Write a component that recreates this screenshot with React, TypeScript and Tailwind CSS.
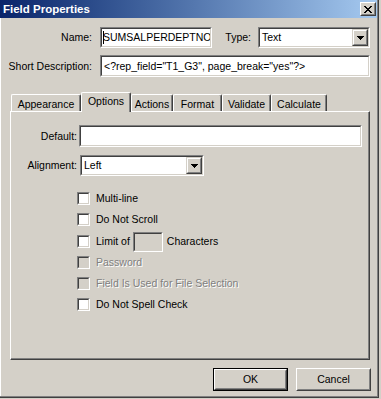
import React from "react";

function Sunken({
  className = "",
  inner = "bg-white",
  children,
}: {
  className?: string;
  inner?: string;
  children?: React.ReactNode;
}) {
  return (
    <div
      className={`border border-t-[#808080] border-l-[#808080] border-r-white border-b-white ${className}`}
    >
      <div
        className={`h-full w-full border border-t-[#404040] border-l-[#404040] border-r-[#d4d0c8] border-b-[#d4d0c8] ${inner} flex items-center overflow-hidden whitespace-nowrap`}
      >
        {children}
      </div>
    </div>
  );
}

function Arrow() {
  return (
    <svg width="7" height="4" viewBox="0 0 7 4" shapeRendering="crispEdges">
      <rect x="0" y="0" width="7" height="1" fill="#000" />
      <rect x="1" y="1" width="5" height="1" fill="#000" />
      <rect x="2" y="2" width="3" height="1" fill="#000" />
      <rect x="3" y="3" width="1" height="1" fill="#000" />
    </svg>
  );
}

function DropButton() {
  return (
    <div className="w-[16px] h-full border border-t-[#d4d0c8] border-l-[#d4d0c8] border-r-[#404040] border-b-[#404040]">
      <div className="w-full h-full border border-t-white border-l-white border-r-[#808080] border-b-[#808080] bg-[#d4d0c8] flex items-center justify-center">
        <Arrow />
      </div>
    </div>
  );
}

function Select({ className, value }: { className: string; value: string }) {
  return (
    <Sunken className={className}>
      <span className="flex-1 pl-[2px]">{value}</span>
      <div className="h-full py-0 flex items-stretch">
        <DropButton />
      </div>
    </Sunken>
  );
}

function CloseX() {
  const cells = [];
  for (let i = 0; i < 7; i++) {
    cells.push(<rect key={"a" + i} x={i} y={i} width="2" height="1" fill="#000" />);
    cells.push(<rect key={"b" + i} x={6 - i} y={i} width="2" height="1" fill="#000" />);
  }
  return (
    <svg width="8" height="7" viewBox="0 0 8 7" shapeRendering="crispEdges">
      {cells}
    </svg>
  );
}

function Checkbox({ disabled = false }: { disabled?: boolean }) {
  return (
    <Sunken
      className="w-[13px] h-[13px] shrink-0"
      inner={disabled ? "bg-[#d4d0c8]" : "bg-white"}
    />
  );
}

function Tab({
  label,
  w,
  selected = false,
}: {
  label: string;
  w: string;
  selected?: boolean;
}) {
  if (selected) {
    return (
      <div
        className={`${w} h-[20px] relative z-10 bg-[#d4d0c8] border-t border-l border-r border-t-white border-l-white border-r-[#404040] rounded-t-[2px] shadow-[inset_-1px_0_0_#808080] flex justify-center pt-[2px] leading-[13px]`}
      >
        {label}
      </div>
    );
  }
  return (
    <div
      className={`${w} h-[17px] mt-[2px] bg-[#d4d0c8] border-t border-l border-r border-t-white border-l-white border-r-[#404040] rounded-t-[2px] shadow-[inset_-1px_0_0_#808080] flex justify-center pt-[3px] leading-[13px]`}
    >
      {label}
    </div>
  );
}

export default function App() {
  const disabledText = "text-[#808080] [text-shadow:1px_1px_0_#ffffff]";
  return (
    <div className="w-[381px] h-[399px] bg-[#d4d0c8] overflow-hidden font-['Liberation_Sans',Arial,sans-serif] text-[10.5px] text-black leading-[13px]">
      <div className="w-[379px] h-[398px] border-r border-b border-r-[#404040] border-b-[#404040]">
        <div className="w-full h-full border-r border-b border-r-[#808080] border-b-[#808080] flex flex-col">
          {/* Title bar */}
          <div className="h-[18px] shrink-0 bg-linear-to-r from-[#0a246a] to-[#a6caf0] flex items-center pl-[3px] pr-[1px]">
            <span className="flex-1 text-white font-bold text-[11.5px] leading-[14px]">
              Field Properties
            </span>
            <div className="w-[16px] h-[14px] border border-t-white border-l-white border-r-[#404040] border-b-[#404040]">
              <div className="w-full h-full border border-t-[#d4d0c8] border-l-[#d4d0c8] border-r-[#808080] border-b-[#808080] bg-[#d4d0c8] flex items-center justify-center">
                <CloseX />
              </div>
            </div>
          </div>

          <div className="flex-1 flex flex-col border-l border-l-white">
            {/* Name / Type */}
            <div className="mt-[9px] h-[21px] flex items-center">
              <div className="w-[91px] text-right">Name:</div>
              <Sunken className="ml-[8px] w-[112px] h-[21px]">
                <span className="w-[1px] h-[13px] bg-black ml-[1px] shrink-0" />
                <span className="-ml-[1px]">SUMSALPERDEPTNO</span>
              </Sunken>
              <div className="w-[46px] text-right pr-[7px]">Type:</div>
              <Select className="w-[112px] h-[21px]" value="Text" />
            </div>

            {/* Short Description */}
            <div className="mt-[7px] h-[22px] flex items-center">
              <div className="w-[91px] text-right">Short Description:</div>
              <Sunken className="ml-[8px] w-[270px] h-[22px]">
                <span className="pl-[2px]">
                  {'<?rep_field="T1_G3", page_break="yes"?>'}
                </span>
              </Sunken>
            </div>

            {/* Tabs */}
            <div className="mt-[15px] ml-[10px] flex items-start h-[19px]">
              <Tab label="Appearance" w="w-[70px]" />
              <Tab label="Options" w="w-[50px]" selected />
              <Tab label="Actions" w="w-[42px]" />
              <Tab label="Format" w="w-[49px]" />
              <Tab label="Validate" w="w-[49px]" />
              <Tab label="Calculate" w="w-[56px]" />
            </div>

            {/* Panel */}
            <div className="ml-[9px] w-[360px] h-[249px] border-t border-l border-t-white border-l-white border-r border-b border-r-[#404040] border-b-[#404040] shadow-[inset_-1px_-1px_0_#808080] flex flex-col">
              <div className="mt-[13px] h-[22px] flex items-center">
                <div className="w-[66px] text-right">Default:</div>
                <Sunken className="ml-[2px] w-[283px] h-[22px]" />
              </div>
              <div className="mt-[8px] h-[21px] flex items-center">
                <div className="w-[66px] text-right">Alignment:</div>
                <Select className="ml-[3px] w-[124px] h-[21px]" value="Left" />
              </div>

              <div className="ml-[66px] flex flex-col">
                <div className="mt-[16px] h-[13px] flex items-center">
                  <Checkbox />
                  <span className="ml-[6px]">Multi-line</span>
                </div>
                <div className="mt-[8px] h-[13px] flex items-center">
                  <Checkbox />
                  <span className="ml-[6px]">Do Not Scroll</span>
                </div>
                <div className="mt-[9px] h-[13px] flex items-center">
                  <Checkbox />
                  <span className="ml-[6px]">Limit of</span>
                  <Sunken
                    className="ml-[3px] w-[30px] h-[20px] shrink-0"
                    inner="bg-[#d4d0c8]"
                  />
                  <span className="ml-[4px]">Characters</span>
                </div>
                <div className="mt-[8px] h-[13px] flex items-center">
                  <Checkbox disabled />
                  <span className={`ml-[6px] ${disabledText}`}>Password</span>
                </div>
                <div className="mt-[8px] h-[13px] flex items-center">
                  <Checkbox disabled />
                  <span className={`ml-[6px] ${disabledText}`}>
                    Field Is Used for File Selection
                  </span>
                </div>
                <div className="mt-[8px] h-[13px] flex items-center">
                  <Checkbox />
                  <span className="ml-[6px]">Do Not Spell Check</span>
                </div>
              </div>
            </div>

            {/* Buttons */}
            <div className="mt-[8px] flex justify-end gap-[8px] pr-[6px]">
              <div className="w-[75px] h-[23px] border border-black">
                <div className="w-full h-full border border-t-white border-l-white border-r-[#404040] border-b-[#404040]">
                  <div className="w-full h-full border border-t-[#d4d0c8] border-l-[#d4d0c8] border-r-[#808080] border-b-[#808080] flex items-center justify-center">
                    OK
                  </div>
                </div>
              </div>
              <div className="w-[75px] h-[23px] border border-t-white border-l-white border-r-[#404040] border-b-[#404040]">
                <div className="w-full h-full border border-t-[#d4d0c8] border-l-[#d4d0c8] border-r-[#808080] border-b-[#808080] flex items-center justify-center">
                  Cancel
                </div>
              </div>
            </div>
          </div>
        </div>
      </div>
    </div>
  );
}
